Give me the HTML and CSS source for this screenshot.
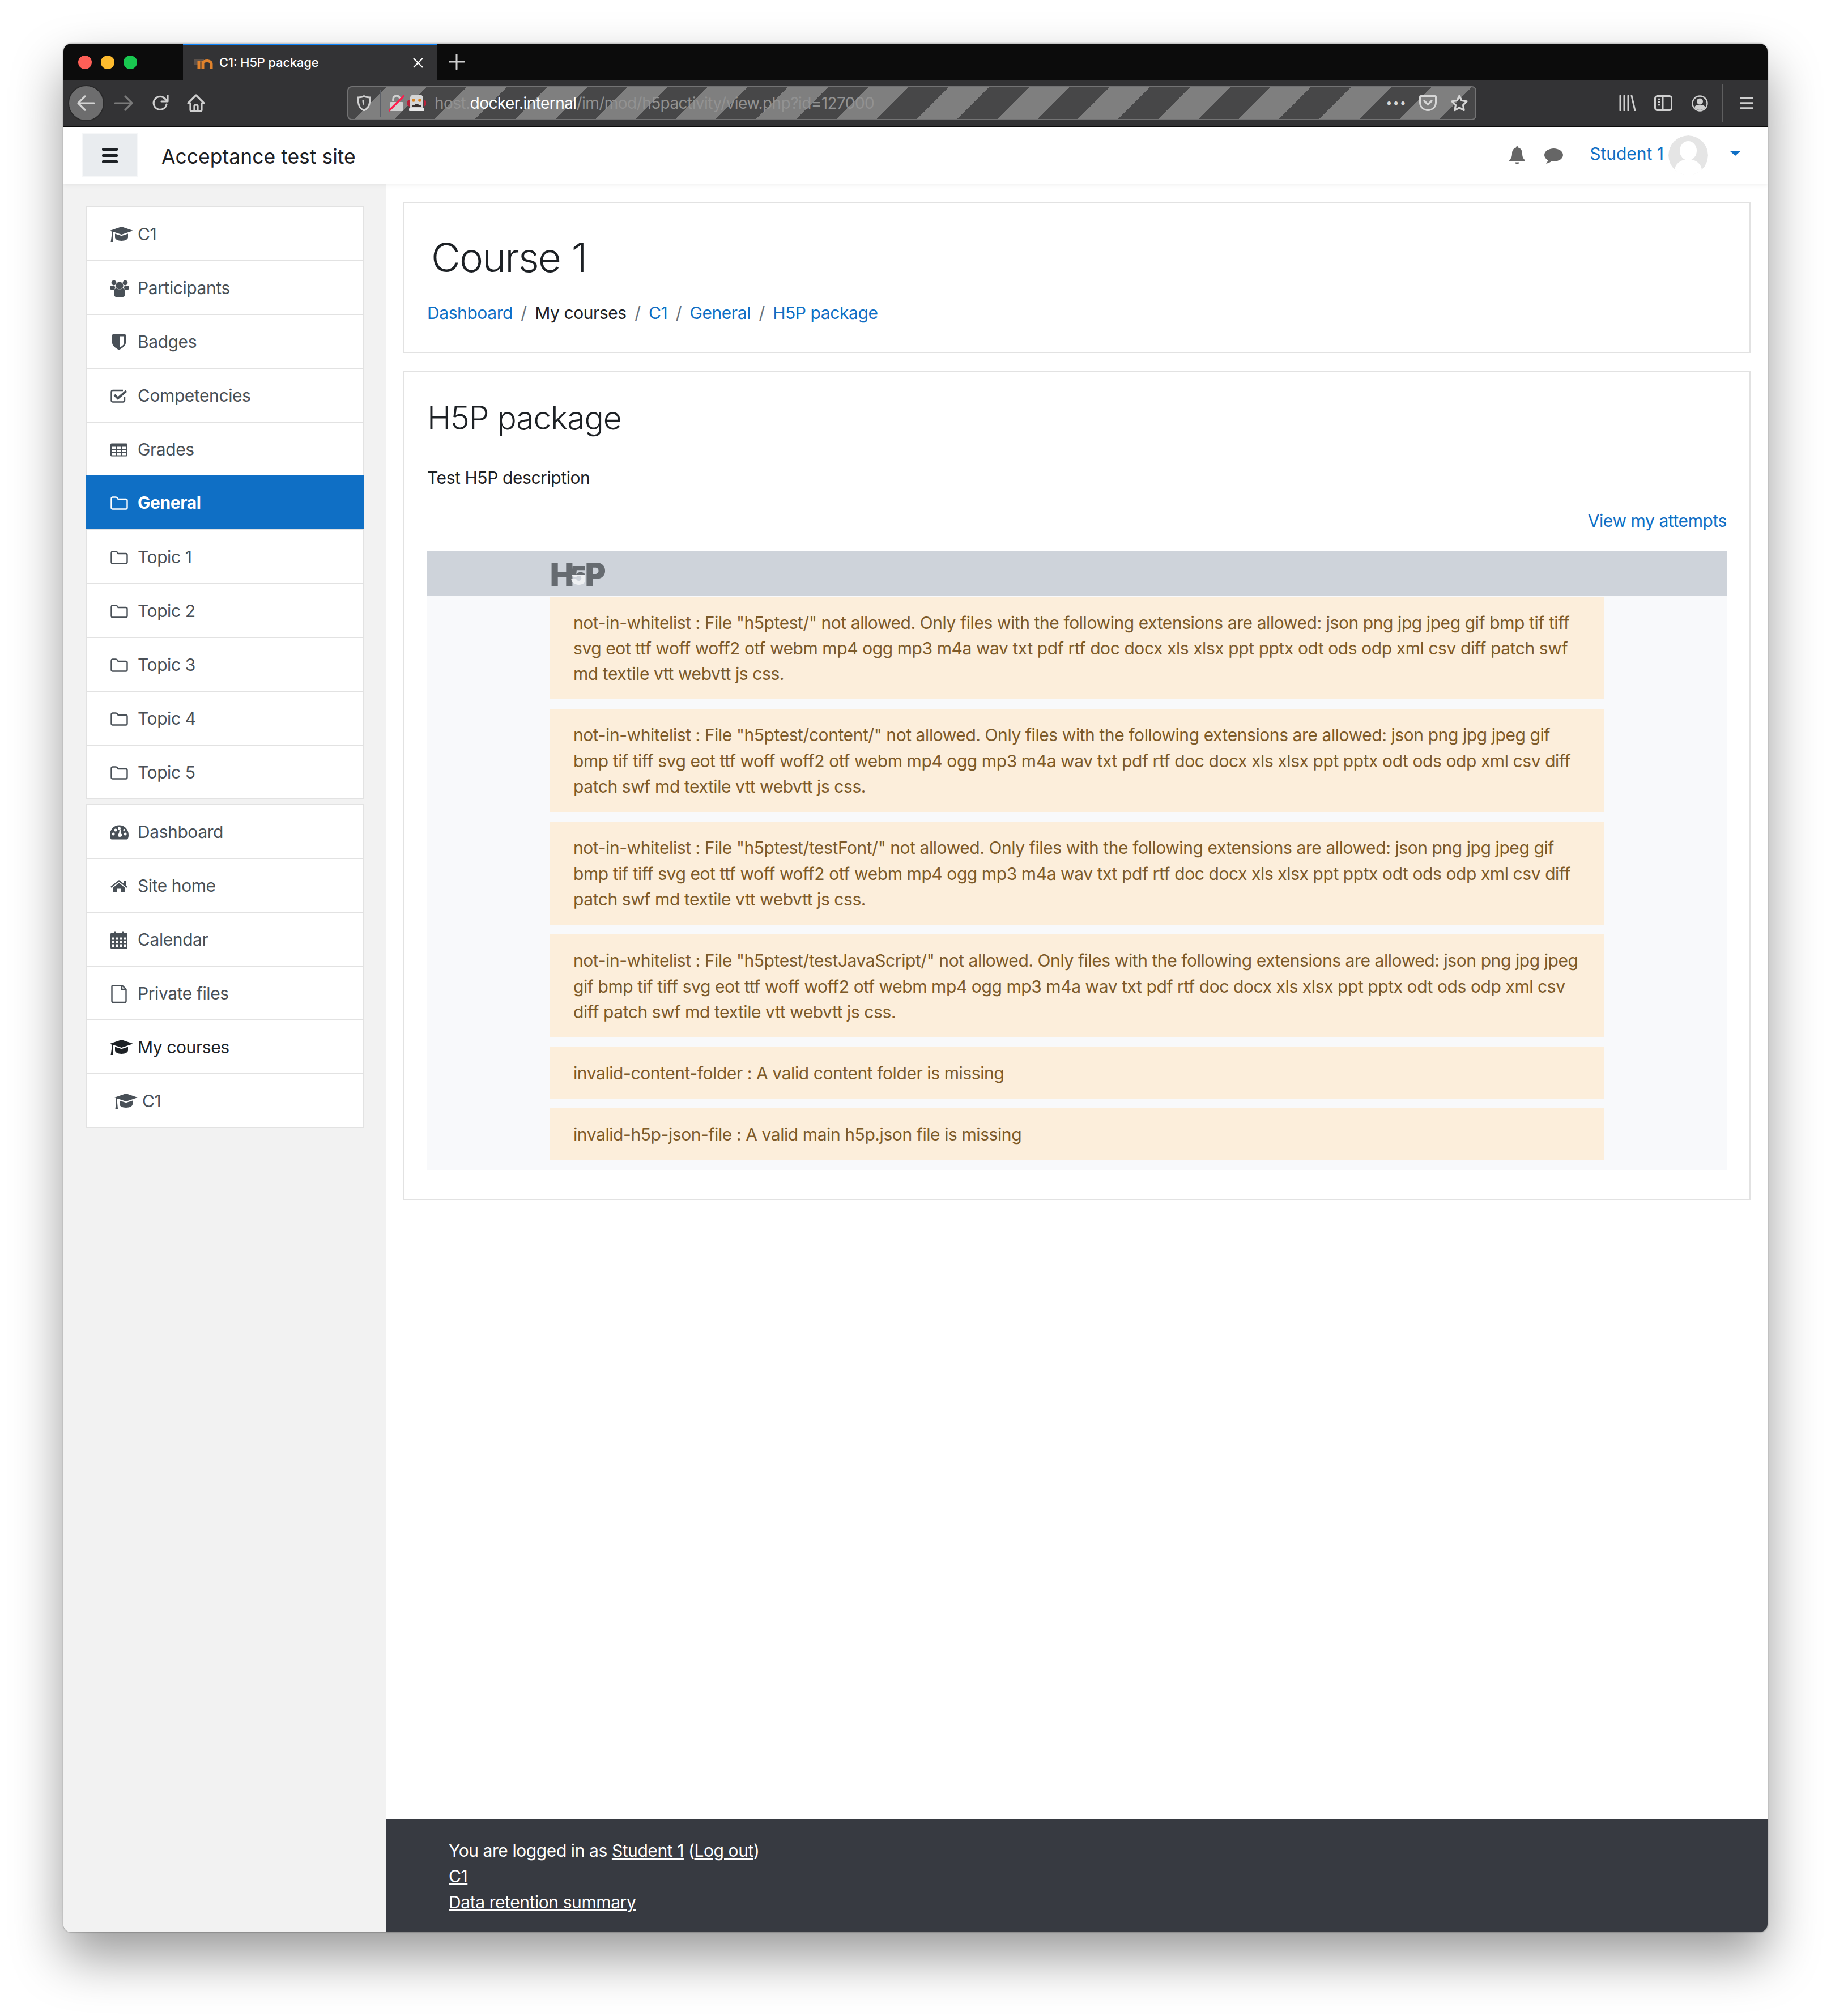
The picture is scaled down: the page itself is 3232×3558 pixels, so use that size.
FILE: index.html
```html
<!DOCTYPE html>
<html lang="en">
<head>
<meta charset="utf-8">
<title>C1: H5P package</title>
<link rel="stylesheet" href="styles.css">
</head>
<body>
<svg class="defs" width="0" height="0" aria-hidden="true">
  <symbol id="i-cap" viewBox="0 -2 41 32"><path d="M20.500 0 41 7 20.500 14 6 9 5 9.500v7l1 10.500H1.500l1.500-10.500V8.500L0 7z"/><path d="M9 12.500 20.500 16.200 32 12.500V19c0 3-5 6-11.500 6S9 22 9 19z"/></symbol>
  <symbol id="i-users" viewBox="0 -1 41 32"><circle cx="17" cy="10" r="6.600"/><circle cx="7" cy="5" r="4.400"/><circle cx="27" cy="5" r="4.400"/><path d="M7 20c0-4 3-5 5-5 2 2 8 2 10 0 2 0 5 1 5 5v5c0 3-2 5-4 5H11c-2 0-4-2-4-5z"/><path d="M7 10c1 1 2 2 3 2-1 1-1 3-2 5H2c-1 0-2-.7-2-2 0-3 1-5 2-5 1 1 3 1 5 0zM27 10c-1 1-2 2-3 2 1 1 1 3 2 5h6c1 0 2-.7 2-2 0-3-1-5-2-5-1 1-3 1-5 0z"/></symbol>
  <symbol id="i-badge" viewBox="-4 -2 41 32"><path fill-rule="evenodd" d="M0 1.500Q0 0 1.500 0h21Q24 0 24 1.500V15c0 6-8 10-12 13C8 25 0 21 0 15zM13 3.500V23.500c4-2 8-5 8-8.500V3.500z"/></symbol>
  <symbol id="i-check" viewBox="-1 -4 41 32"><path class="st" d="M25 13v6.500q0 3-3 3H4.500q-3 0-3-3V5q0-3 3-3H22"/><path class="st3" d="M7 10l6 6L28 3"/></symbol>
  <symbol id="i-table" viewBox="-1 -4.500 41 32"><path fill-rule="evenodd" d="M2 0h26q2 0 2 2v19q0 2-2 2H2q-2 0-2-2V2q0-2 2-2zM2 6v4h7V6zm9 0v4h8V6zm10 0v4h7V6zM2 12v3.500h7V12zm9 0v3.500h8V12zm10 0v3.500h7V12zM2 17.500V21h7v-3.500zm9 0V21h8v-3.500zm10 0V21h7v-3.500z"/></symbol>
  <symbol id="i-folder" viewBox="-1.500 -4 41 32"><path class="st" d="M1 4.500Q1 1.500 3.500 1.500H9q2 0 3 2l1 1.500h13.500Q29 5 29 7.500v12.500q0 2.500-2.500 2.500h-23Q1 22.500 1 20z"/></symbol>
  <symbol id="i-dash" viewBox="0 -3.500 41 32"><path fill-rule="evenodd" d="M16.500 0C7 0 0 7.500 0 17c0 3 .5 5 1.500 7 .3.6 1 1 1.500 1h27c.6 0 1.200-.4 1.500-1 1-2 1.500-4 1.500-7C33 7.500 26 0 16.500 0zM6 18a2.500 2.500 0 1 1 0-5 2.500 2.500 0 0 1 0 5zm4-7a2.500 2.500 0 1 1 0-5 2.500 2.500 0 0 1 0 5zm6.500-3a2.500 2.500 0 1 1 0-5 2.500 2.500 0 0 1 0 5zm7 2 .5-4 3 1-2 4zm3.500 8a2.500 2.500 0 1 1 0-5 2.500 2.500 0 0 1 0 5zm-9.500 2.500a3 3 0 0 1-3.500-3c0-1.500 1-2.500 2-3l1-7h2l.5 7c1.500.8 2 2 2 3 0 1.600-1.500 3-4 3z"/></symbol>
  <symbol id="i-home" viewBox="-1 -5 41 32"><path d="M15 0 24 7V1.500h3.500V10L30 12l-1.500 1.800L15 3 1.500 13.800 0 12z"/><path d="M4 14 15 5.200 26 14v7a1 1 0 0 1-1 1h-7v-6.500h-6V22H5a1 1 0 0 1-1-1z"/></symbol>
  <symbol id="i-cal" viewBox="-1 -.5 41 32"><path fill-rule="evenodd" d="M6 0h3v3h12V0h3v3h4q2 0 2 2v24q0 2-2 2H2q-2 0-2-2V5q0-2 2-2h4zM2 11v4h5v-4zm7 0v4h5v-4zm7 0v4h5v-4zm7 0v4h5v-4zM2 17v4h5v-4zm7 0v4h5v-4zm7 0v4h5v-4zm7 0v4h5v-4zM2 23v5.500h5V23zm7 0v5.500h5V23zm7 0v5.500h5V23zm7 0v5.500h5V23z"/></symbol>
  <symbol id="i-file" viewBox="-2 0 41 32"><path class="st" d="M1.500 3q0-2 2-2h16L26.500 8v21q0 2-2 2h-21q-2 0-2-2z"/><path class="st" d="M19 1v7h7.500"/></symbol>
</svg>

<div class="window">
  <div class="titlebar">
    <div class="lights"><i class="light red"></i><i class="light amber"></i><i class="light green"></i></div>
    <div class="tab">
      <svg class="favicon" viewBox="0 0 34 22"><path d="M1 4h17v6H9v5H1z" fill="#5b514b"/><path d="M9 21V8" stroke="#e0822c" stroke-width="5" fill="none"/><path d="M16 21V7M16 11c2-5 15-5 15 2v8" stroke="#e0822c" stroke-width="5" fill="none"/></svg>
      <span class="tab-title">C1: H5P package</span>
      <svg class="tab-close" viewBox="0 0 20 20"><path d="M2 2l16 16M18 2 2 18" stroke="#fff" stroke-width="2.400"/></svg>
    </div>
    <svg class="newtab" viewBox="0 0 28 28"><path d="M14 1v26M1 14h26" stroke="#d0d0d0" stroke-width="3" stroke-linecap="round"/></svg>
  </div>

  <div class="toolbar">
    <div class="backbtn"><svg viewBox="0 0 32 28" class="ic32"><path d="M30 14H3M14 2 2 14l12 12" fill="none" stroke="#d4d4d4" stroke-width="3.200" stroke-linecap="round" stroke-linejoin="round"/></svg></div>
    <svg class="tool fwd" viewBox="0 0 34 28"><path d="M2 14h28M20 2l12 12-12 12" fill="none" stroke="#7b7b7b" stroke-width="3.200" stroke-linecap="round" stroke-linejoin="round"/></svg>
    <svg class="tool reload" viewBox="0 0 30 30"><path d="M26 17a11.500 11.500 0 1 1-4-11l4 4" fill="none" stroke="#cfcfcf" stroke-width="3.200" stroke-linecap="round"/><path d="M28 1v11H17" fill="none" stroke="#cfcfcf" stroke-width="3.200" stroke-linecap="round" stroke-linejoin="round"/></svg>
    <svg class="tool homebtn" viewBox="0 0 32 32"><path d="M2 16 16 2l14 14h-4v12q0 2-2 2H8q-2 0-2-2V16zM13 30v-9q0-2 3-2t3 2v9" fill="none" stroke="#cfcfcf" stroke-width="3.200" stroke-linejoin="round"/></svg>

    <div class="urlbar">
      <svg class="u-shield" viewBox="0 0 25 28"><path d="M12.500 1.500c3 2 6 2.500 10.500 2.500 0 10-1 19-10.500 23C3 23 2 14 2 4c4.500 0 7.500-.5 10.500-2.500z" fill="none" stroke="#d0d0d0" stroke-width="3"/><path d="M12.500 8v10C10 16 9.500 13 9.500 9c1.500 0 2-.3 3-1z" fill="#d0d0d0"/></svg>
      <i class="u-div"></i>
      <svg class="u-lock" viewBox="0 0 28 30"><path d="M8 12V8a6 6 0 0 1 12 0v4" fill="none" stroke="#d0d0d0" stroke-width="3.500"/><rect x="2" y="13" width="24" height="16" rx="2" fill="#d0d0d0"/><path d="M1 28 27 2" stroke="#ff1b4c" stroke-width="3.500" stroke-linecap="round"/></svg>
      <svg class="u-robot" viewBox="0 0 33 30"><path d="M0 11l4-2v12l-4-2zM33 11l-4-2v12l4-2z" fill="#b9213a"/><path d="M7 2q0-1 1-1h17q1 0 1 1l2 2v19H5V4z" fill="#d6d6d6"/><circle cx="11" cy="10" r="2.800" fill="#d9821f"/><circle cx="22" cy="10" r="2.800" fill="#d9821f"/><path d="M9 21v-3h4l1-2h5l1 2h4v3z" fill="#3a3230"/><rect x="3" y="24" width="27" height="5" rx="1" fill="#e6e6e6"/></svg>
      <div class="url"><span class="dim">host.</span><span class="domain">docker.internal</span><span class="dim">/im/mod/h5pactivity/view.php?id=127000</span></div>
      <span class="dots">•••</span>
      <svg class="u-pocket" viewBox="0 0 31 28"><path d="M3 1.500h25q1.500 0 1.500 1.500v10c0 8-7 13.500-14 13.500S1.500 21 1.500 13V3Q1.500 1.500 3 1.500z" fill="none" stroke="#d6d6d6" stroke-width="3"/><path d="M9 10l6.500 6.500L22 10" fill="none" stroke="#d6d6d6" stroke-width="3.400" stroke-linecap="round" stroke-linejoin="round"/></svg>
      <svg class="u-star" viewBox="0 0 32 32"><path d="M16 3l4 8.500 9 1.300-6.500 6.500 1.600 9.200L16 24l-8.100 4.500 1.600-9.200L3 12.800l9-1.300z" fill="none" stroke="#d6d6d6" stroke-width="3.200" stroke-linejoin="round"/></svg>
    </div>

    <div class="tool-right">
      <svg class="tr lib" viewBox="0 0 30 28"><path d="M2 1v26M9 1v26M16 1v26M22 1l6 26" stroke="#cfcfcf" stroke-width="3" fill="none" stroke-linecap="round"/></svg>
      <svg class="tr side" viewBox="0 0 32 28"><rect x="1.500" y="1.500" width="29" height="25" rx="4" fill="none" stroke="#cfcfcf" stroke-width="3"/><path d="M15 2v24" stroke="#cfcfcf" stroke-width="3"/><path d="M6 7h5M6 12h5M6 17h5" stroke="#cfcfcf" stroke-width="2.400"/></svg>
      <svg class="tr acct" viewBox="0 0 29 29"><circle cx="14.500" cy="14.500" r="13" fill="none" stroke="#cfcfcf" stroke-width="2.400"/><circle cx="14.500" cy="11" r="5.500" fill="#cfcfcf"/><path d="M5 21c2-4 6-4 9.500-4s7.500 0 9.500 4c-2 3-6 5-9.500 5S7 24 5 21z" fill="#cfcfcf"/></svg>
      <i class="tsep"></i>
      <svg class="tr menu" viewBox="0 0 24 24"><path d="M1.500 3h21M1.500 12h21M1.500 21h21" stroke="#cfcfcf" stroke-width="3.400" stroke-linecap="round"/></svg>
    </div>
  </div>

  <header class="navbar">
    <button class="burger" type="button" aria-label="Menu"><span></span><span></span><span></span></button>
    <a class="brand">Acceptance test site</a>
    <div class="nav-right">
      <svg class="nav-bell" viewBox="0 0 28 32"><path d="M14 0c1.500 0 2 1 2 2.500C21 4 23 8 23 13c0 6 2 9 5 12 0 1-.5 2-1.500 2h-25C.5 27 0 26 0 25c3-3 5-6 5-12 0-5 2-9 7-10.500C12 1 12.500 0 14 0zM10.500 28.500h7C17 30.500 15.800 32 14 32s-3-1.500-3.500-3.500z"/></svg>
      <svg class="nav-chat" viewBox="0 0 33 28"><path d="M16.500 1C25.500 1 33 6 33 12.500S25.500 24 16.500 24c-1.500 0-2.500 0-4-.4C9.500 26 6 27.500 3 28c1.500-2 3-4 3.400-6.500C2.500 19.500 0 16 0 12.500 0 6 7.500 1 16.500 1z"/></svg>
      <a class="student">Student 1</a>
      <div class="avatar"><svg viewBox="0 0 70 70"><circle cx="35" cy="35" r="35" fill="#e5e5e5"/><ellipse cx="35" cy="27" rx="15" ry="17" fill="#fff"/><ellipse cx="35" cy="62" rx="24" ry="20" fill="#fff"/></svg></div>
      <i class="caret"></i>
    </div>
  </header>

  <div class="page">
    <aside class="drawer">
      <nav class="list">
        <a class="row"><svg class="ico"><use href="#i-cap"/></svg>C1</a>
        <a class="row"><svg class="ico"><use href="#i-users"/></svg>Participants</a>
        <a class="row"><svg class="ico"><use href="#i-badge"/></svg>Badges</a>
        <a class="row"><svg class="ico"><use href="#i-check"/></svg>Competencies</a>
        <a class="row"><svg class="ico"><use href="#i-table"/></svg>Grades</a>
        <a class="row active"><svg class="ico"><use href="#i-folder"/></svg>General</a>
        <a class="row"><svg class="ico"><use href="#i-folder"/></svg>Topic 1</a>
        <a class="row"><svg class="ico"><use href="#i-folder"/></svg>Topic 2</a>
        <a class="row"><svg class="ico"><use href="#i-folder"/></svg>Topic 3</a>
        <a class="row"><svg class="ico"><use href="#i-folder"/></svg>Topic 4</a>
        <a class="row"><svg class="ico"><use href="#i-folder"/></svg>Topic 5</a>
      </nav>
      <nav class="list second">
        <a class="row"><svg class="ico"><use href="#i-dash"/></svg>Dashboard</a>
        <a class="row"><svg class="ico"><use href="#i-home"/></svg>Site home</a>
        <a class="row"><svg class="ico"><use href="#i-cal"/></svg>Calendar</a>
        <a class="row"><svg class="ico"><use href="#i-file"/></svg>Private files</a>
        <a class="row dark"><svg class="ico"><use href="#i-cap"/></svg>My courses</a>
        <a class="row indent"><svg class="ico"><use href="#i-cap"/></svg>C1</a>
      </nav>
    </aside>

    <div class="content">
      <main class="main">
        <section class="card head-card">
          <h1>Course 1</h1>
          <ol class="crumbs">
            <li><a>Dashboard</a></li>
            <li class="sep">/</li>
            <li>My courses</li>
            <li class="sep">/</li>
            <li><a>C1</a></li>
            <li class="sep">/</li>
            <li><a>General</a></li>
            <li class="sep">/</li>
            <li><a>H5P package</a></li>
          </ol>
        </section>
        <section class="card body-card">
          <h2>H5P package</h2>
          <p class="desc">Test H5P description</p>
          <div class="attempts"><a>View my attempts</a></div>
          <div class="h5p">
            <div class="h5p-bar"><span class="h5p-logo">H<span class="five">5</span>P</span></div>
            <div class="h5p-body">
              <div class="alert">not-in-whitelist : File "h5ptest/" not allowed. Only files with the following extensions are allowed: json png jpg jpeg gif bmp tif tiff<br>svg eot ttf woff woff2 otf webm mp4 ogg mp3 m4a wav txt pdf rtf doc docx xls xlsx ppt pptx odt ods odp xml csv diff patch swf<br>md textile vtt webvtt js css.</div>
              <div class="alert">not-in-whitelist : File "h5ptest/content/" not allowed. Only files with the following extensions are allowed: json png jpg jpeg gif<br>bmp tif tiff svg eot ttf woff woff2 otf webm mp4 ogg mp3 m4a wav txt pdf rtf doc docx xls xlsx ppt pptx odt ods odp xml csv diff<br>patch swf md textile vtt webvtt js css.</div>
              <div class="alert">not-in-whitelist : File "h5ptest/testFont/" not allowed. Only files with the following extensions are allowed: json png jpg jpeg gif<br>bmp tif tiff svg eot ttf woff woff2 otf webm mp4 ogg mp3 m4a wav txt pdf rtf doc docx xls xlsx ppt pptx odt ods odp xml csv diff<br>patch swf md textile vtt webvtt js css.</div>
              <div class="alert">not-in-whitelist : File "h5ptest/testJavaScript/" not allowed. Only files with the following extensions are allowed: json png jpg jpeg<br>gif bmp tif tiff svg eot ttf woff woff2 otf webm mp4 ogg mp3 m4a wav txt pdf rtf doc docx xls xlsx ppt pptx odt ods odp xml csv<br>diff patch swf md textile vtt webvtt js css.</div>
              <div class="alert">invalid-content-folder : A valid content folder is missing</div>
              <div class="alert">invalid-h5p-json-file : A valid main h5p.json file is missing</div>
            </div>
          </div>
        </section>
      </main>
      <footer class="footer">
        <div>You are logged in as <a>Student 1</a> (<a>Log out</a>)</div>
        <div><a>C1</a></div>
        <div><a>Data retention summary</a></div>
      </footer>
    </div>
  </div>
</div>
</body>
</html>
```

FILE: styles.css
```css
* { box-sizing: border-box; }
html, body { margin: 0; padding: 0; }
body {
  width: 3232px;
  height: 3558px;
  padding: 77px 112px 148px;
  background: #fff;
  font-family: Inter, "Liberation Sans", sans-serif;
  font-size: 30px;
  line-height: 45.300px;
  letter-spacing: -.42px;
  color: #1d2125;
  overflow: hidden;
}
.defs { position: absolute; }
.st { fill: none; stroke: currentColor; stroke-width: 2.400; }
.st3 { fill: none; stroke: currentColor; stroke-width: 4; }

.window {
  width: 3008px;
  height: 3333px;
  border-radius: 14px;
  overflow: hidden;
  display: flex;
  flex-direction: column;
  background: #fff;
  box-shadow: 0 44px 90px rgba(0,0,0,.4), 0 0 3px rgba(0,0,0,.45);
}

/* browser chrome */
.titlebar { height: 65px; background: #0c0c0c; display: flex; align-items: stretch; }
.lights { width: 211px; display: flex; align-items: center; gap: 16px; padding: 0 0 0 26px; }
.light { width: 24px; height: 24px; border-radius: 50%; }
.red { background: #fe5f57; }
.amber { background: #febb2e; }
.green { background: #19c850; }
.tab {
  width: 449px;
  background: #333335;
  border-top: 3px solid #0a84ff;
  display: flex;
  align-items: center;
  padding-left: 19px;
  padding-right: 24px;
}
.favicon { width: 34px; height: 22px; margin-right: 11px; }
.tab-title { color: #fff; font-size: 21.700px; font-weight: 500; flex: 1; letter-spacing: 0; }
.tab-close { width: 20px; height: 20px; }
.newtab { width: 28px; height: 28px; margin: 18px 0 0 20px; }

.toolbar {
  height: 82px;
  background: #333335;
  border-bottom: 2px solid #0c0c0c;
  display: flex;
  align-items: center;
  padding-left: 8px;
}
.backbtn {
  width: 64px; height: 64px; border-radius: 50%;
  background: #6d6d6e;
  border: 2px solid #2a2a2b;
  display: flex; align-items: center; justify-content: center;
}
.ic32 { width: 32px; height: 28px; }
.tool { flex: none; }
.fwd { width: 34px; height: 28px; margin-left: 17px; }
.reload { width: 30px; height: 30px; margin-left: 33px; }
.homebtn { width: 32px; height: 32px; margin-left: 32px; }

.urlbar {
  width: 1993px; height: 60px;
  margin-left: 251px;
  border: 2px solid #737374;
  border-radius: 8px;
  background: repeating-linear-gradient(135deg, #474748 -3.500px, #474748 46.700px, #7f7f7f 46.700px, #7f7f7f 96.900px);
  display: flex; align-items: center;
  padding-left: 15px; padding-right: 12px;
}
.u-shield { width: 25px; height: 28px; }
.u-div { width: 2px; height: 48px; background: #5c6068; margin-left: 15px; }
.u-lock { width: 28px; height: 30px; margin-left: 14px; }
.u-robot { width: 33px; height: 30px; margin-left: 5px; }
.url { margin-left: 15px; padding-top: 2px; font-size: 28px; letter-spacing: -.56px; white-space: nowrap; flex: 1; }
.dim { color: #929292; }
.domain { color: #fff; }
.dots { color: #d6d6d6; font-size: 20px; letter-spacing: 1px; margin-right: 22px; }
.u-pocket { width: 31px; height: 28px; }
.u-star { width: 32px; height: 32px; margin-left: 24px; }

.tool-right { display: flex; align-items: center; margin-left: 252px; height: 68px; }
.tr { flex: none; }
.lib { width: 30px; height: 28px; }
.side { width: 32px; height: 28px; margin-left: 32px; }
.acct { width: 29px; height: 29px; margin-left: 34px; }
.tsep { width: 2px; height: 68px; background: #5f5f60; margin-left: 24px; }
.menu { width: 24px; height: 24px; margin-left: 30px; }

/* moodle navbar */
.navbar {
  height: 100px;
  flex: none;
  background: #fff;
  display: flex;
  align-items: center;
  padding-left: 33px;
  position: relative;
  box-shadow: 0 2px 8px rgba(0,0,0,.07);
  z-index: 2;
}
.burger {
  width: 98px; height: 78px;
  background: #e9ecef;
  border: 2px solid #f6f7f8;
  padding: 0;
  display: flex; flex-direction: column; align-items: center; justify-content: center; gap: 6px;
}
.burger span { width: 28px; height: 5px; border-radius: 2px; background: #1d2125; }
.brand { margin-left: 42px; margin-top: 6px; font-size: 35.500px; letter-spacing: 0; color: #1d2125; }
.nav-right { margin-left: auto; display: flex; align-items: center; padding-right: 47px; }
.nav-bell { width: 28px; height: 32px; fill: #666; margin-left: 1px; }
.nav-chat { width: 33px; height: 28px; fill: #666; margin-left: 34px; margin-top: 2px; }
.student { color: #0f6fc5; margin-left: 47px; margin-top: -4px; letter-spacing: 0; }
.avatar { width: 70px; height: 70px; margin-left: 8px; overflow: hidden; border-radius: 50%; }
.avatar svg { width: 70px; height: 70px; display: block; }
.caret {
  width: 0; height: 0;
  border-left: 10px solid transparent;
  border-right: 10px solid transparent;
  border-top: 9px solid #0f6fc5;
  margin-left: 38px;
  margin-top: -8px;
}

/* page */
.page { flex: 1; display: flex; min-height: 0; }
.drawer { width: 570px; flex: none; background: #f2f2f2; padding: 40px 40px 0; }
.list { background: #fff; border: 2px solid #e2e2e2; border-bottom: 0; }
.second { margin-top: 8px; }
.row {
  height: 95px;
  border-bottom: 2px solid #e2e2e2;
  display: flex;
  align-items: center;
  padding-left: 40px;
  padding-top: 2px;
  color: #495057;
  font-size: 30px;
}
.ico { width: 41px; height: 32px; margin-right: 8px; fill: currentColor; color: #495057; flex: none; }
.active {
  height: 97px;
  background: #0f6fc5;
  background-clip: padding-box;
  color: #fff;
  font-weight: 700;
  margin: -2px -2px 0;
  padding-left: 42px;
  padding-top: 3px;
}
.active .ico { color: #fff; }
.dark { color: #1d2125; }
.dark .ico { color: #1d2125; }
.indent { padding-left: 48px; }

.content { flex: 1; display: flex; flex-direction: column; min-width: 0; }
.main { flex: 1; padding: 33px 30px 0; }
.card { background: #fff; border: 2px solid #e2e2e2; }
.head-card { height: 266px; padding: 0 40px; }
h1 { margin: 0; padding: 53px 0 0 7px; font-size: 71px; font-weight: 300; line-height: 85px; letter-spacing: -1.800px; word-spacing: 1.500px; }
.crumbs { list-style: none; display: flex; margin: 33px 0 0; padding: 0; gap: 14.400px; }
.sep { color: #6a737b; }
.crumbs a, .attempts a { color: #0f6fc5; }
.body-card { height: 1463px; margin-top: 32px; padding: 0 40px; }
h2 { margin: 0; padding-top: 47px; font-size: 57px; font-weight: 300; line-height: 68px; letter-spacing: -1.100px; }
.desc { margin: 49px 0 0; }
.attempts { text-align: right; margin-top: 31px; }
.h5p { margin-top: 30px; background: #f8f9fb; }
.h5p-bar { height: 79px; background: #ced3da; padding-left: 217px; display: flex; align-items: center; }
.h5p-logo { font-size: 56px; font-weight: 900; color: #666b70; letter-spacing: -5px; line-height: 1; margin-top: 4px; white-space: nowrap; }
.five {
  display: inline-block;
  font-size: 46px;
  line-height: 46px;
  letter-spacing: -4px;
  margin-left: -2px;
  vertical-align: 2px;
  color: transparent;
  background: linear-gradient(#666b70 50%, #eef0f2 50%);
  -webkit-background-clip: text;
  background-clip: text;
}
.h5p-body { display: flow-root; padding: 1px 217px 0; }
.alert {
  background: #fceedb;
  color: #7d5a29;
  padding: 24px 41px 22px;
  margin-bottom: 17px;
  white-space: nowrap;
}

.footer {
  height: 199px;
  flex: none;
  background: #373a41;
  color: #fff;
  padding: 33px 110px 0;
}
.footer a { text-decoration: underline; }
```
